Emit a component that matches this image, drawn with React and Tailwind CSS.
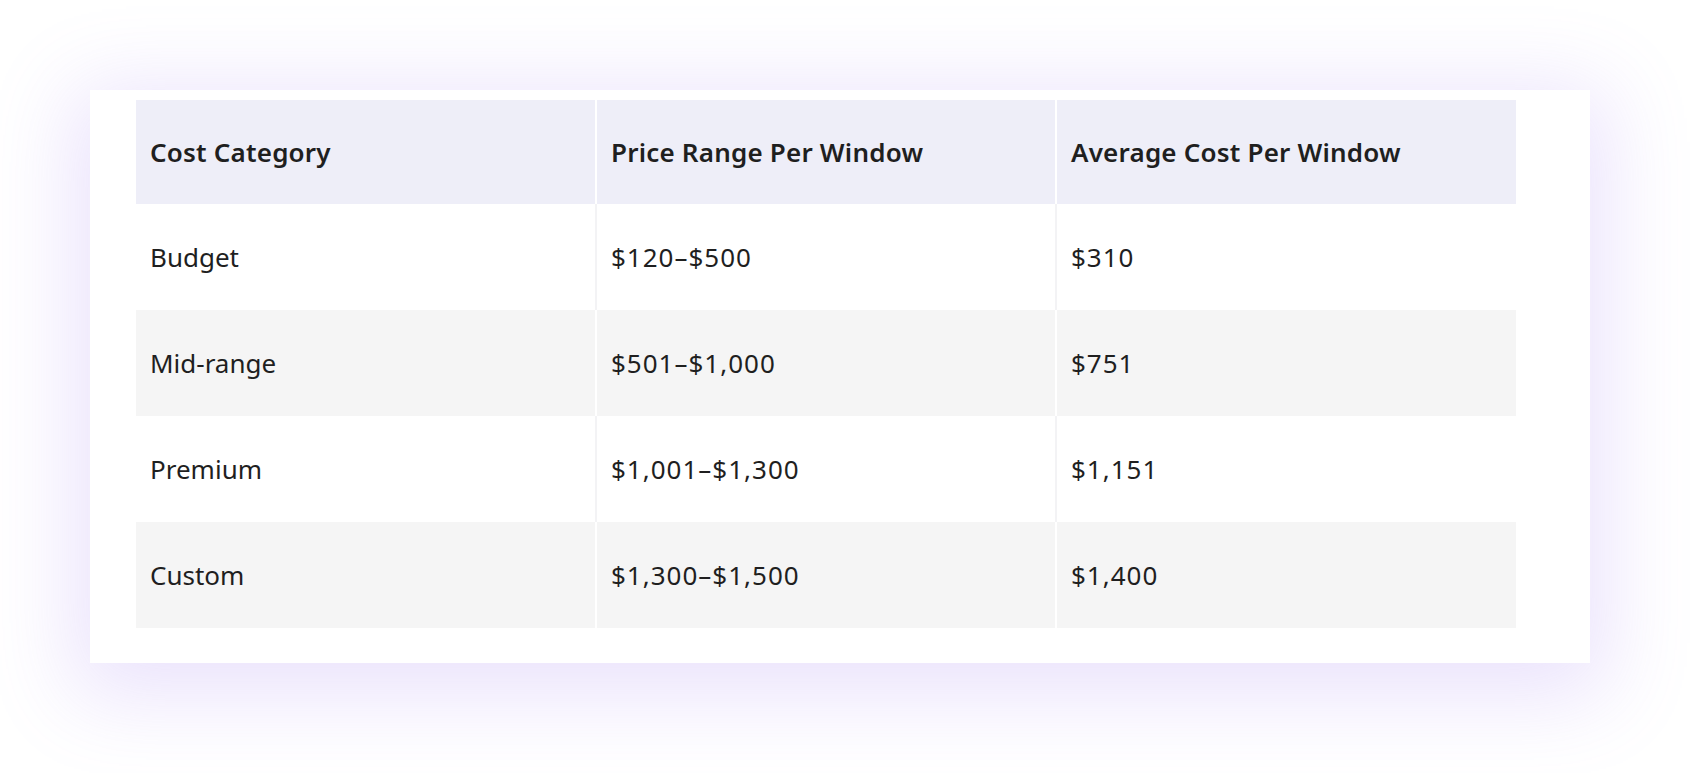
import React from 'react';

const rows = [
  { category: 'Budget', range: '$120–$500', average: '$310' },
  { category: 'Mid-range', range: '$501–$1,000', average: '$751' },
  { category: 'Premium', range: '$1,001–$1,300', average: '$1,151' },
  { category: 'Custom', range: '$1,300–$1,500', average: '$1,400' },
];

const headers = ['Cost Category', 'Price Range Per Window', 'Average Cost Per Window'];

export default function App() {
  return (
    <div
      className="w-[1700px] h-[773px] bg-white pt-[90px] pl-[90px]"
      style={{ fontFamily: '"Noto Sans", "Open Sans", sans-serif' }}
    >
      {/* Card with lavender glow */}
      <div className="w-[1500px] h-[573px] bg-white pt-[10px] pl-[46px] shadow-[0_16px_80px_16px_rgba(150,110,240,0.2)]">
        <table className="w-[1380px] table-fixed border-collapse text-[#1f1f1f] text-[26px]">
          <thead>
            <tr className="bg-[#eeeef8] h-[104px]">
              {headers.map((h, i) => (
                <th
                  key={h}
                  className={`text-left font-semibold pl-[14px] tracking-[0.2px] ${i < 2 ? 'border-r-2 border-white' : ''}`}
                >
                  {h}
                </th>
              ))}
            </tr>
          </thead>
          <tbody>
            {rows.map((r, idx) => {
              const striped = idx % 2 === 1;
              const divider = striped ? 'border-white' : 'border-[#f3f3f5]';
              return (
                <tr key={r.category} className={`h-[106px] ${striped ? 'bg-[#f5f5f5]' : 'bg-white'}`}>
                  <td className={`pl-[14px] border-r-2 ${divider}`}>{r.category}</td>
                  <td className={`pl-[14px] tracking-[1px] border-r-2 ${divider}`}>{r.range}</td>
                  <td className="pl-[14px] tracking-[1px]">{r.average}</td>
                </tr>
              );
            })}
          </tbody>
        </table>
      </div>
    </div>
  );
}
